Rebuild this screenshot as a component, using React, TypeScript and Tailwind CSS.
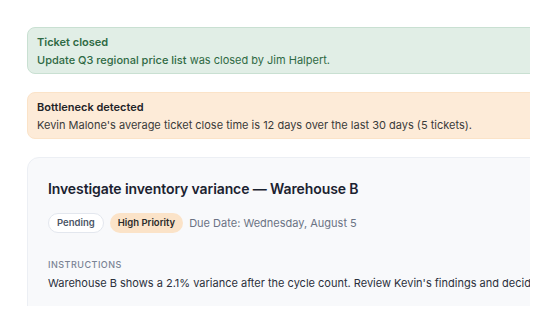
export default function App() {
  return (
    <div className="min-h-screen bg-white pl-[27px] pt-[27px] font-['Inter',sans-serif]">
      {/* viewport crop: content runs past the right edge */}
      <div className="w-[503px] h-[279px] overflow-hidden">
        <div className="w-[600px] flex flex-col gap-[18px]">
          {/* Ticket closed */}
          <div className="rounded-l-lg border border-[#c9e0d2] bg-[#e1eee6] pl-[9px] pt-[5px] pb-[4px] text-[11px] leading-[18px] text-[#2f6a44]">
            <div className="font-semibold">Ticket closed</div>
            <div>
              <span className="font-medium">Update Q3 regional price list</span> was closed by Jim Halpert.
            </div>
          </div>

          {/* Bottleneck */}
          <div className="rounded-l-lg border border-[#fbe3c8] bg-[#fdebd8] pl-[9px] pt-[5px] pb-[4px] text-[11px] leading-[18px] text-[#3a3a3a]">
            <div className="font-semibold text-[#1f2328]">Bottleneck detected</div>
            <div>Kevin Malone's average ticket close time is 12 days over the last 30 days (5 tickets).</div>
          </div>

          {/* Ticket card */}
          <div className="rounded-tl-xl border border-[#eceff4] bg-[#f8f9fb] pl-[20px] pt-[21px] pb-[20px]">
            <h2 className="text-[14px] leading-[20px] font-semibold tracking-[-0.1px] text-[#1b2230]">
              Investigate inventory variance — Warehouse B
            </h2>
            <div className="mt-[14px] flex items-center gap-[6px]">
              <span className="rounded-full border border-[#e3e7ee] bg-white px-[8px] py-[2px] text-[9.5px] leading-[14px] font-semibold text-[#4b5565]">
                Pending
              </span>
              <span className="rounded-full bg-[#fbe3c8] px-[8px] py-[3px] text-[9.5px] leading-[14px] font-semibold text-[#2a2a2a]">
                High Priority
              </span>
              <span className="text-[11px] leading-[18px] text-[#6b7384]">Due Date: Wednesday, August 5</span>
            </div>
            <div className="mt-[25px] text-[9px] leading-[13px] font-medium tracking-[0.5px] text-[#7a8394]">
              INSTRUCTIONS
            </div>
            <p className="mt-[4px] text-[11px] leading-[17px] text-[#2b303b] whitespace-nowrap">
              Warehouse B shows a 2.1% variance after the cycle count. Review Kevin's findings and decide whether to adjust.
            </p>
          </div>
        </div>
      </div>
    </div>
  );
}
